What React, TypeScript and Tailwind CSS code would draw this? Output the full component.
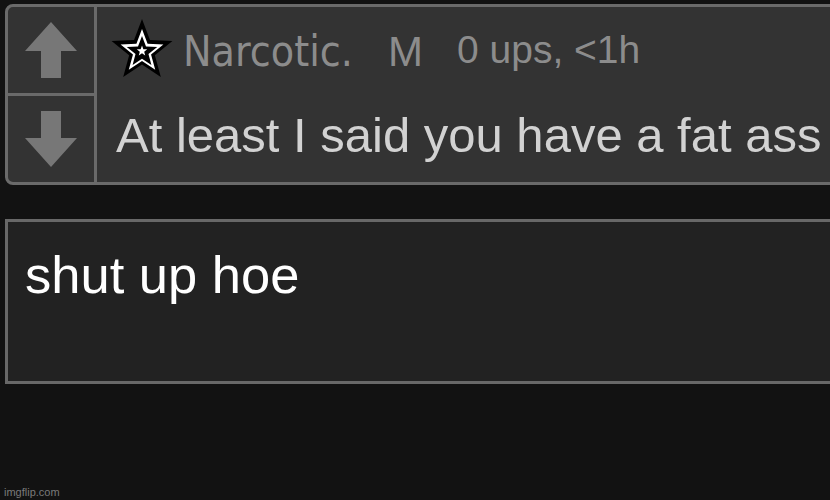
import React from 'react';

function starPoints(cx: number, cy: number, R: number, r: number) {
  const pts: string[] = [];
  for (let i = 0; i < 10; i++) {
    const rad = i % 2 === 0 ? R : r;
    const a = (-90 + i * 36) * Math.PI / 180;
    pts.push(`${(cx + rad * Math.cos(a)).toFixed(2)},${(cy + rad * Math.sin(a)).toFixed(2)}`);
  }
  return pts.join(' ');
}

function Star() {
  return (
    <svg width="64" height="64" viewBox="0 0 64 64" className="shrink-0">
      <polygon points={starPoints(32, 32, 32, 13.5)} fill="#000" />
      <polygon points={starPoints(32, 32.5, 22.5, 9.5)} fill="#fff" />
      <polygon points={starPoints(32, 33, 16, 6.8)} fill="#000" />
      <polygon points={starPoints(32, 32, 5.5, 2.3)} fill="#fff" />
    </svg>
  );
}

function Arrow({ down }: { down?: boolean }) {
  return (
    <svg width="52" height="56" viewBox="0 0 52 56" className={down ? 'rotate-180' : ''}>
      <polygon points="26,0 52,29 36,29 36,56 16,56 16,29 0,29" fill="#777777" />
    </svg>
  );
}

export default function App() {
  return (
    <div className="relative w-[830px] h-[500px] overflow-hidden bg-[#121212] flex flex-col" style={{ fontFamily: '"Liberation Sans", Arial, sans-serif' }}>
      {/* comment card */}
      <div className="mt-[4px] ml-[5px] w-[850px] h-[181px] shrink-0 flex border-[3px] border-[#6a6a6a] rounded-l-[8px] bg-[#333333]">
        <div className="w-[89px] shrink-0 flex flex-col border-r-[3px] border-[#6a6a6a]">
          <div className="h-[86px] flex items-center justify-center border-b-[3px] border-[#6a6a6a] box-content">
            <Arrow />
          </div>
          <div className="flex-1 flex items-center justify-center">
            <Arrow down />
          </div>
        </div>
        <div className="flex-1 flex flex-col pt-[12px]">
          <div className="flex items-start">
            <div className="ml-[13px]">
              <Star />
            </div>
            <span className="ml-[9px] mt-[12px] text-[42.5px] leading-none text-[#8c8c8c]" style={{ fontFamily: '"DejaVu Sans Condensed", "Liberation Sans", sans-serif' }}>
              Narcotic.
            </span>
            <span className="ml-[35px] mt-[12px] text-[42px] leading-none text-[#8c8c8c]">M</span>
            <span className="ml-[34px] mt-[11px] text-[39px] leading-none text-[#8c8c8c]">0 ups, &lt;1h</span>
          </div>
          <div className="ml-[19px] mt-[28px] text-[49px] leading-none text-[#d2d2d2] whitespace-nowrap">
            At least I said you have a fat ass
          </div>
        </div>
      </div>

      {/* reply box */}
      <div className="mt-[34px] ml-[5px] w-[850px] h-[165px] shrink-0 border-[3px] border-[#686868] bg-[#222222] pl-[17px] pt-[27px]">
        <div className="text-[52.5px] leading-none text-white">shut up hoe</div>
      </div>

      <div className="absolute left-[4px] bottom-[2px] text-[11px] leading-none text-[#7a7a7a]">imgflip.com</div>
    </div>
  );
}
